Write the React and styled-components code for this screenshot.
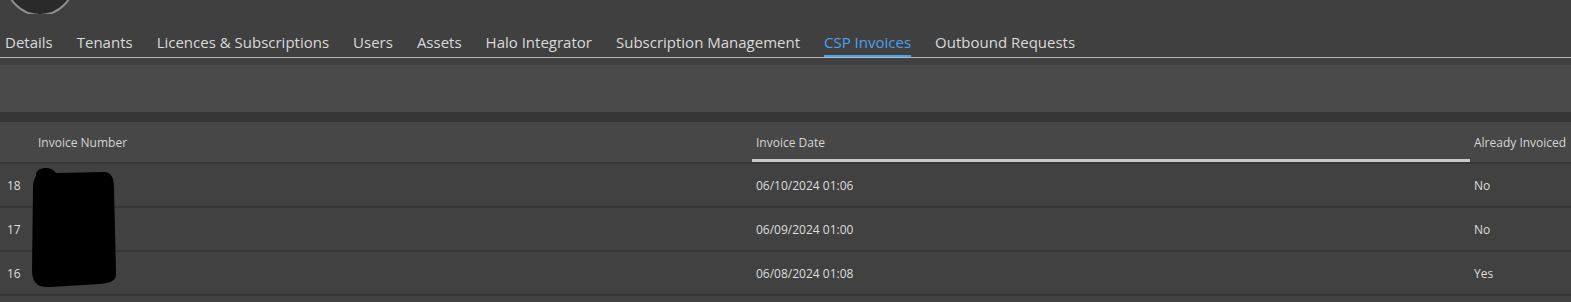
import React from "react";
import styled, { createGlobalStyle } from "styled-components";

const GlobalStyle = createGlobalStyle`
  html, body {
    margin: 0;
    padding: 0;
    background: #404040;
    overflow: hidden;
  }
  body {
    font-family: "Open Sans", "Liberation Sans", sans-serif;
    color: #dcdcdc;
  }
`;

const Page = styled.div`
  width: 1571px;
  height: 302px;
  overflow: hidden;
  background: #404040;
  position: relative;
`;

const AvatarStrip = styled.div`
  height: 14px;
  overflow: hidden;
`;

const Avatar = styled.div`
  width: 66px;
  height: 66px;
  margin: -54px 0 0 5px;
  border-radius: 50%;
  background: #2a2a2a;
  border: 2px solid #8e8e8e;
`;

const TabBar = styled.nav`
  display: flex;
  gap: 24px;
  padding-left: 5px;
  border-bottom: 1px solid #b8b8b8;
`;

const Tab = styled.div`
  padding: 18px 0 3px;
  line-height: 20px;
  font-size: 15px;
  white-space: nowrap;
  color: ${p => (p.active ? "#4ba3ef" : "#dadada")};
  border-bottom: 2px solid ${p => (p.active ? "#4ba3ef" : "transparent")};
`;

const Toolbar = styled.div`
  margin-top: 7px;
  height: 47px;
  background: #4a4a4a;
`;

const Strip = styled.div`
  height: 10px;
  background: #363636;
`;

const Grid = styled.div`
  display: grid;
  grid-template-columns: 34px 718px 718px 300px;
  width: 1770px;
`;

const HeadCell = styled.div`
  box-sizing: border-box;
  height: 42px;
  display: flex;
  align-items: center;
  padding-left: ${p => (p.first ? "7px" : "4px")};
  background: #474747;
  font-size: 12px;
  color: #d6d6d6;
  white-space: nowrap;
  border-bottom: 2px solid #383838;
  box-shadow: ${p => (p.sorted ? "inset 0 -3px 0 #c9c9c9" : "none")};
`;

const Cell = styled.div`
  box-sizing: border-box;
  height: 44px;
  display: flex;
  align-items: center;
  padding-left: ${p => (p.first ? "7px" : "4px")};
  background: #414141;
  font-size: 12px;
  color: #dedede;
  white-space: nowrap;
  border-bottom: 2px solid #363636;
`;

const Redaction = styled.svg`
  position: absolute;
  left: 0;
  top: 0;
  pointer-events: none;
`;

const tabs = [
  "Details",
  "Tenants",
  "Licences & Subscriptions",
  "Users",
  "Assets",
  "Halo Integrator",
  "Subscription Management",
  "CSP Invoices",
  "Outbound Requests",
];

const invoices = [
  { id: 18, date: "06/10/2024 01:06", invoiced: "No" },
  { id: 17, date: "06/09/2024 01:00", invoiced: "No" },
  { id: 16, date: "06/08/2024 01:08", invoiced: "Yes" },
  { id: 15, date: "", invoiced: "" },
];

export default function App() {
  return (
    <>
      <GlobalStyle />
      <Page>
        <AvatarStrip>
          <Avatar />
        </AvatarStrip>
        <TabBar>
          {tabs.map(t => (
            <Tab key={t} active={t === "CSP Invoices"}>
              {t}
            </Tab>
          ))}
        </TabBar>
        <Toolbar />
        <Strip />
        <Grid>
          <HeadCell first />
          <HeadCell>Invoice Number</HeadCell>
          <HeadCell sorted>Invoice Date</HeadCell>
          <HeadCell>Already Invoiced</HeadCell>
          {invoices.map(r => (
            <React.Fragment key={r.id}>
              <Cell first>{r.date ? r.id : ""}</Cell>
              <Cell />
              <Cell>{r.date}</Cell>
              <Cell>{r.invoiced}</Cell>
            </React.Fragment>
          ))}
        </Grid>
        {/* hand-drawn blackout over the invoice numbers */}
        <Redaction width="130" height="302" viewBox="0 0 130 302">
          <path
            d="M36 176 C35 167 51 165 56 173 L104 172 C112 172 114 179 114 188 L116 272 C117 281 111 283 100 284 L50 287 C37 288 32 282 32 270 L33 190 C33 183 34 179 36 176 Z"
            fill="#000"
          />
        </Redaction>
      </Page>
    </>
  );
}
